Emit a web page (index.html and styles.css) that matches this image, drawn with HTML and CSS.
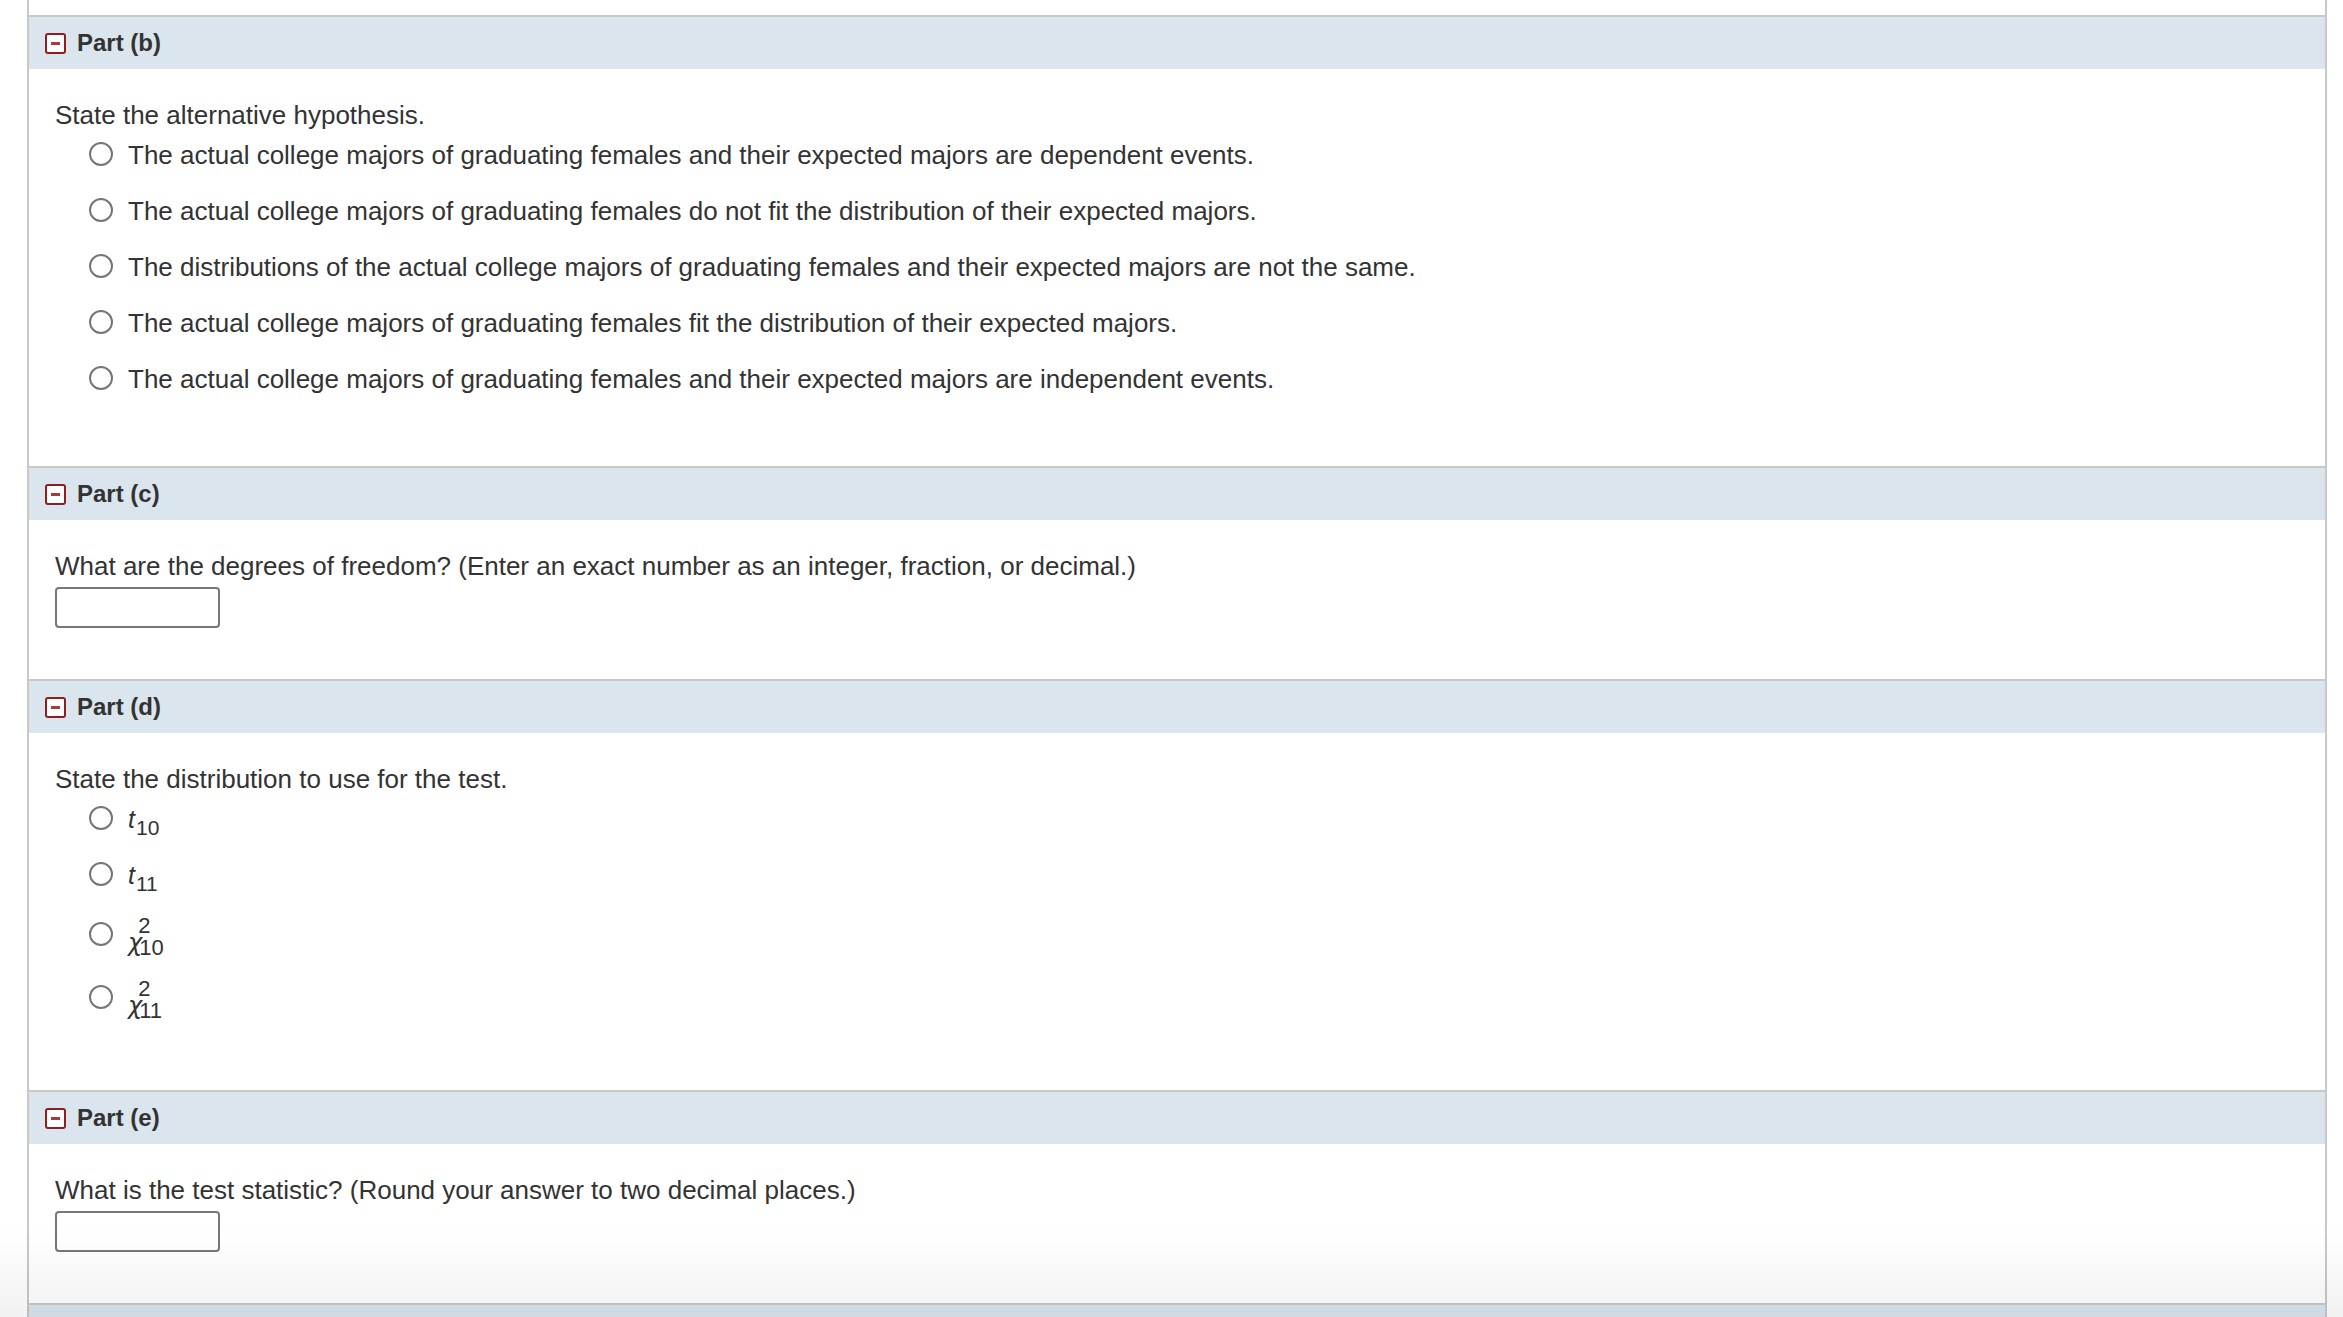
FILE: index.html
```html
<!DOCTYPE html>
<html lang="en">
<head>
<meta charset="utf-8">
<title>Parts</title>
<link rel="stylesheet" href="styles.css">
</head>
<body>
<div class="page">
  <section class="part">
    <div class="part-head"><span class="toggle"></span><span class="part-title">Part (b)</span></div>
    <div class="part-body body-b">
      <div class="question">State the alternative hypothesis.</div>
      <div class="options">
        <label class="option"><span class="radio"></span><span class="opt-text">The actual college majors of graduating females and their expected majors are dependent events.</span></label>
        <label class="option"><span class="radio"></span><span class="opt-text">The actual college majors of graduating females do not fit the distribution of their expected majors.</span></label>
        <label class="option"><span class="radio"></span><span class="opt-text">The distributions of the actual college majors of graduating females and their expected majors are not the same.</span></label>
        <label class="option"><span class="radio"></span><span class="opt-text">The actual college majors of graduating females fit the distribution of their expected majors.</span></label>
        <label class="option"><span class="radio"></span><span class="opt-text">The actual college majors of graduating females and their expected majors are independent events.</span></label>
      </div>
    </div>
  </section>

  <section class="part">
    <div class="part-head"><span class="toggle"></span><span class="part-title">Part (c)</span></div>
    <div class="part-body body-input">
      <div class="question">What are the degrees of freedom? (Enter an exact number as an integer, fraction, or decimal.)</div>
      <div class="answer-box"></div>
    </div>
  </section>

  <section class="part">
    <div class="part-head"><span class="toggle"></span><span class="part-title">Part (d)</span></div>
    <div class="part-body body-d">
      <div class="question">State the distribution to use for the test.</div>
      <div class="options">
        <label class="option"><span class="radio"></span><span class="opt-text"><span class="m-t">t</span><span class="m-sub">10</span></span></label>
        <label class="option"><span class="radio"></span><span class="opt-text"><span class="m-t">t</span><span class="m-sub">11</span></span></label>
        <label class="option option-chi"><span class="radio"></span><span class="opt-text math-chi"><span class="m-chi">χ</span><span class="m-scripts"><span class="m-sup">2</span><span class="m-low">10</span></span></span></label>
        <label class="option option-chi"><span class="radio"></span><span class="opt-text math-chi"><span class="m-chi">χ</span><span class="m-scripts"><span class="m-sup">2</span><span class="m-low">11</span></span></span></label>
      </div>
    </div>
  </section>

  <section class="part">
    <div class="part-head"><span class="toggle"></span><span class="part-title">Part (e)</span></div>
    <div class="part-body body-input">
      <div class="question">What is the test statistic? (Round your answer to two decimal places.)</div>
      <div class="answer-box"></div>
    </div>
  </section>

  <section class="part">
    <div class="part-head"><span class="toggle"></span><span class="part-title">Part (f)</span></div>
    <div class="part-body body-input">
      <div class="question">&nbsp;</div>
    </div>
  </section>
</div>
</body>
</html>
```

FILE: styles.css
```css
html, body {
  margin: 0;
  padding: 0;
  background: #ffffff;
}

body {
  font-family: "Liberation Sans", Arial, sans-serif;
  color: #333333;
  overflow: hidden;
  height: 1317px;
}

body::after {
  content: "";
  position: fixed;
  left: 0;
  right: 0;
  bottom: 0;
  height: 90px;
  background: linear-gradient(to bottom, rgba(0, 0, 0, 0), rgba(0, 0, 0, 0.05));
  pointer-events: none;
}

.page {
  margin-left: 27px;
  width: 2300px;
  box-sizing: border-box;
  border-left: 2px solid #c8c8c8;
  border-right: 2px solid #c8c8c8;
  padding-top: 15px;
  min-height: 1400px;
}

.part-head {
  display: flex;
  align-items: center;
  height: 52px;
  background: #dbe5ee;
  border-top: 2px solid #c8c8c8;
  padding-left: 16px;
}

.toggle {
  position: relative;
  width: 21px;
  height: 21px;
  box-sizing: border-box;
  border: 2px solid #8c1f1f;
  border-radius: 3px;
  background: #ffffff;
  flex: none;
}

.toggle::before {
  content: "";
  position: absolute;
  left: 4px;
  top: 7.5px;
  width: 9px;
  height: 2.5px;
  background: #a83a3a;
}

.part-title {
  margin-left: 11px;
  font-weight: bold;
  font-size: 24px;
  line-height: 30px;
  color: #333333;
}

.part-body {
  padding-left: 26px;
  padding-top: 31px;
  font-size: 26px;
  line-height: 30px;
}

.body-b {
  height: 366px;
}

.body-input {
  height: 128px;
}

.body-d {
  height: 326px;
}

.question {
  margin-bottom: 10px;
}

.body-input .question {
  margin-bottom: 6px;
}

.options {
  padding-left: 34px;
}

.option {
  display: flex;
  align-items: flex-start;
  height: 30px;
  margin-bottom: 26px;
}

.option-chi {
  padding: 3.5px 0;
}

.radio {
  width: 24px;
  height: 24px;
  box-sizing: border-box;
  border: 2px solid #767676;
  border-radius: 50%;
  margin-top: 2px;
  flex: none;
  background: #ffffff;
}

.opt-text {
  margin-left: 15px;
  white-space: nowrap;
}

.answer-box {
  width: 165px;
  height: 41px;
  box-sizing: border-box;
  border: 2px solid #777777;
  border-radius: 4px;
  background: #ffffff;
}

.m-t {
  font-style: italic;
  font-size: 25px;
}

.m-sub {
  font-size: 21px;
  vertical-align: -7px;
  margin-left: 1px;
}

.math-chi {
  display: flex;
  align-items: flex-start;
  line-height: 18px;
}

.m-chi {
  font-family: "DejaVu Sans", sans-serif;
  font-style: italic;
  font-size: 24px;
  line-height: 22px;
  margin-top: 12px;
}

.m-scripts {
  display: flex;
  flex-direction: column;
  margin-left: -3px;
  margin-top: -3px;
}

.m-sup {
  font-size: 22px;
  line-height: 18px;
  margin-left: -1px;
}

.m-low {
  font-size: 22px;
  line-height: 18px;
  margin-top: 4px;
}
```
